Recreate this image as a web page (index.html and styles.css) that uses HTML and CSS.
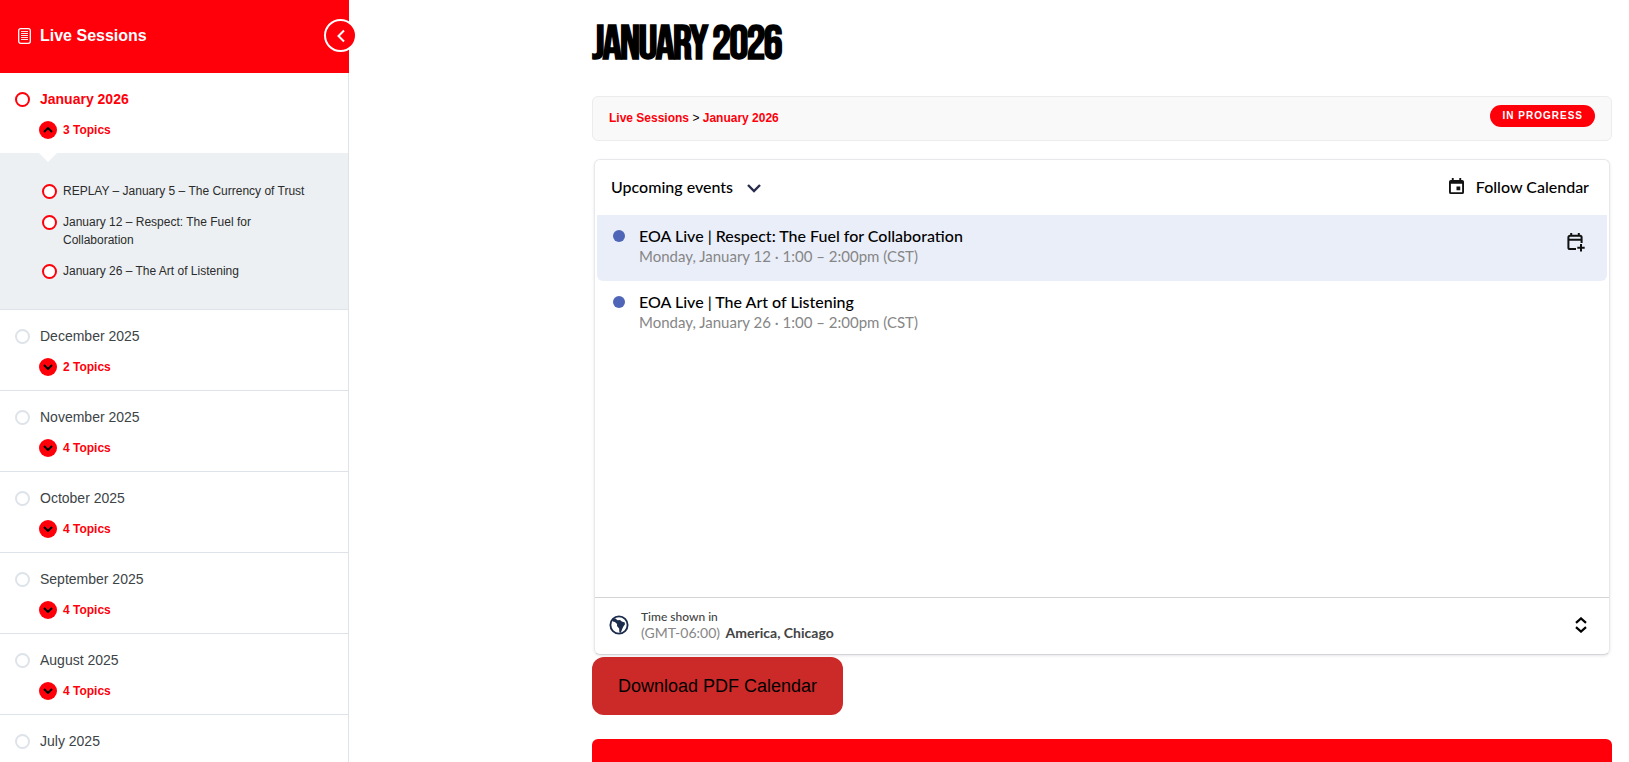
FILE: index.html
```html
<!DOCTYPE html>
<html lang="en">
<head>
    <meta charset="UTF-8">
    <meta name="viewport" content="width=device-width, initial-scale=1.0">
    <title>January 2026 - Live Sessions</title>
    <link rel="stylesheet" href="styles.css">
</head>
<body>
    <div class="focus">
        <aside class="sidebar">
            <header class="sidebar-header">
                <svg class="course-icon" viewBox="0 0 13 16" fill="none" stroke="#fff">
                    <rect x="0.7" y="0.7" width="11.6" height="14.6" rx="2" stroke-width="1.3"/>
                    <path d="M3 3.5h7M3 5.5h7M3 7.5h7M3 9.5h7M3 11.5h7" stroke-width="0.9"/>
                </svg>
                <a class="course-title" href="#">Live Sessions</a>
                <button class="sidebar-toggle" type="button" aria-label="Collapse sidebar">
                    <svg width="10" height="14" viewBox="0 0 10 14" fill="none" stroke="#fff" stroke-width="2"><path d="M8 1.5 2.5 7 8 12.5"/></svg>
                </button>
            </header>
            <nav class="lessons">
                <section class="lesson current">
                    <a class="lesson-link" href="#"><span class="status"></span>January 2026</a>
                    <button class="topics-toggle" type="button"><span class="toggle-icon"><svg viewBox="0 0 10 6"><path d="M1 5l4-4 4 4"/></svg></span>3 Topics</button>
                    <ul class="topics">
                        <li><a href="#"><span class="status"></span>REPLAY – January 5 – The Currency of Trust</a></li>
                        <li><a href="#"><span class="status"></span>January 12 – Respect: The Fuel for Collaboration</a></li>
                        <li><a href="#"><span class="status"></span>January 26 – The Art of Listening</a></li>
                    </ul>
                </section>
                <section class="lesson">
                    <a class="lesson-link" href="#"><span class="status"></span>December 2025</a>
                    <button class="topics-toggle" type="button"><span class="toggle-icon"><svg viewBox="0 0 10 6"><path d="M1 1l4 4 4-4"/></svg></span>2 Topics</button>
                </section>
                <section class="lesson">
                    <a class="lesson-link" href="#"><span class="status"></span>November 2025</a>
                    <button class="topics-toggle" type="button"><span class="toggle-icon"><svg viewBox="0 0 10 6"><path d="M1 1l4 4 4-4"/></svg></span>4 Topics</button>
                </section>
                <section class="lesson">
                    <a class="lesson-link" href="#"><span class="status"></span>October 2025</a>
                    <button class="topics-toggle" type="button"><span class="toggle-icon"><svg viewBox="0 0 10 6"><path d="M1 1l4 4 4-4"/></svg></span>4 Topics</button>
                </section>
                <section class="lesson">
                    <a class="lesson-link" href="#"><span class="status"></span>September 2025</a>
                    <button class="topics-toggle" type="button"><span class="toggle-icon"><svg viewBox="0 0 10 6"><path d="M1 1l4 4 4-4"/></svg></span>4 Topics</button>
                </section>
                <section class="lesson">
                    <a class="lesson-link" href="#"><span class="status"></span>August 2025</a>
                    <button class="topics-toggle" type="button"><span class="toggle-icon"><svg viewBox="0 0 10 6"><path d="M1 1l4 4 4-4"/></svg></span>4 Topics</button>
                </section>
                <section class="lesson">
                    <a class="lesson-link" href="#"><span class="status"></span>July 2025</a>
                </section>
            </nav>
        </aside>

        <main class="content">
            <h1>January 2026</h1>
            <div class="lesson-status">
                <div class="breadcrumbs"><a href="#">Live Sessions</a> &gt; <a href="#">January 2026</a></div>
                <span class="badge">In Progress</span>
            </div>

            <div class="calendar">
                <div class="calendar-header">
                    <button class="calendar-btn view-btn" type="button">Upcoming events
                        <svg width="14" height="9" viewBox="0 0 14 9" fill="none" stroke="#292d4c" stroke-width="2.4"><path d="M1 1l6 6 6-6"/></svg>
                    </button>
                    <button class="calendar-btn" type="button">
                        <svg width="15" height="17" viewBox="0 0 16 18">
                            <path fill="#111" fill-rule="evenodd" d="M3 0h2v2h6V0h2v2h1a2 2 0 0 1 2 2v11a2 2 0 0 1-2 2H2a2 2 0 0 1-2-2V4a2 2 0 0 1 2-2h1zM2 6v9h12V6zM8 9h4v4H8z"/>
                        </svg>
                        Follow Calendar
                    </button>
                </div>
                <ul class="events">
                    <li class="event active">
                        <span class="dot"></span>
                        <div class="event-text">
                            <div class="event-title">EOA Live | Respect: The Fuel for Collaboration</div>
                            <div class="event-time">Monday, January 12 · 1:00 – 2:00pm (CST)</div>
                        </div>
                        <button class="add-btn" type="button" aria-label="Add to calendar">
                            <svg width="18" height="19" viewBox="0 0 18 19" fill="none" stroke="#111" stroke-width="2">
                                <path d="M9 16H3a1.6 1.6 0 0 1-1.6-1.6V4.4A1.6 1.6 0 0 1 3 2.8h10a1.6 1.6 0 0 1 1.6 1.6V10M1.4 6.8h13.2M4.2 0v3M11.8 0v3M14 11v7.4M10.3 14.7h7.4"/>
                            </svg>
                        </button>
                    </li>
                    <li class="event">
                        <span class="dot"></span>
                        <div class="event-text">
                            <div class="event-title">EOA Live | The Art of Listening</div>
                            <div class="event-time">Monday, January 26 · 1:00 – 2:00pm (CST)</div>
                        </div>
                    </li>
                </ul>
                <button class="timezone" type="button">
                    <svg width="20" height="20" viewBox="0 0 20 20">
                        <circle cx="10" cy="10" r="8.6" fill="none" stroke="#1b2b4b" stroke-width="1.9"/>
                        <path fill="#1b2b4b" d="M3.2 4.2 6.5 3.6l2 1.6 2.5-.1 1.8 1.5 3 .9.1 1.9-1.5 2-1.2 2.6-1.4 3.8-1.4-.2-.3-4.2-2.1-2.4.1-2.1-2.2-1.9-2-.6z"/>
                    </svg>
                    <span class="timezone-text">
                        <span class="timezone-label">Time shown in</span>
                        <span class="timezone-value"><span class="offset">(GMT-06:00)</span> <b>America, Chicago</b></span>
                    </span>
                    <svg width="12" height="16" viewBox="0 0 12 16" fill="none" stroke="#000" stroke-width="2.2"><path d="M1 5.8l5-4.4 5 4.4M1 10.2l5 4.4 5-4.4"/></svg>
                </button>
            </div>

            <a class="download" href="#">Download PDF Calendar</a>
            <div class="banner"></div>
        </main>
    </div>
</body>
</html>
```
FILE: styles.css
```css
* {
    box-sizing: border-box;
}
body {
    margin: 0;
    font-family: Arial, 'Liberation Sans', sans-serif;
    font-size: 14px;
    color: #000;
    background: #fff;
}
a {
    color: inherit;
    text-decoration: none;
}
button {
    padding: 0;
    border: none;
    background: none;
    font: inherit;
    color: inherit;
    cursor: pointer;
}
ul {
    margin: 0;
    padding: 0;
    list-style: none;
}
svg {
    flex: none;
}
.focus {
    display: flex;
    height: 100vh;
    overflow: hidden;
}

/* Sidebar */
.sidebar {
    flex: none;
    width: 349px;
    border-right: 1px solid #dde3e8;
}
.sidebar-header {
    position: relative;
    display: flex;
    align-items: center;
    gap: 9px;
    height: 73px;
    margin-right: -1px;
    padding: 0 18px 2px;
    background: #ff000a;
    color: #fff;
}
.course-icon {
    width: 13px;
    height: 16px;
}
.course-title {
    font-size: 16px;
    font-weight: bold;
}
.sidebar-toggle {
    position: absolute;
    top: 19px;
    right: -8px;
    display: flex;
    align-items: center;
    justify-content: center;
    width: 33px;
    height: 33px;
    border: 2px solid #fff;
    border-radius: 50%;
    background: #ff000a;
}
.lesson {
    min-height: 81px;
    padding-top: 16px;
    border-bottom: 1px solid #dde3e8;
}
.lesson-link {
    display: flex;
    align-items: center;
    gap: 10px;
    padding-left: 15px;
    line-height: 20px;
    color: #3c4447;
}
.status {
    flex: none;
    width: 15px;
    height: 15px;
    border: 2px solid #dde3e8;
    border-radius: 50%;
    background: #fff;
}
.current .status {
    border-color: #ff000a;
}
.current .lesson-link {
    font-weight: bold;
    color: #ff000a;
}
.topics-toggle {
    display: flex;
    align-items: center;
    gap: 6px;
    margin: 12px 0 14px 39px;
    font-size: 12px;
    font-weight: bold;
    color: #ff000a;
}
.toggle-icon {
    display: flex;
    align-items: center;
    justify-content: center;
    width: 18px;
    height: 18px;
    border-radius: 50%;
    background: #ff000a;
}
.toggle-icon svg {
    width: 10px;
    height: 6px;
    fill: none;
    stroke: #000;
    stroke-width: 2;
}
.topics {
    position: relative;
    display: flex;
    flex-direction: column;
    gap: 13px;
    padding: 29px 32px 29px 42px;
    background: #ecf0f3;
}
.topics::before {
    content: '';
    position: absolute;
    top: 0;
    left: 39px;
    border: 9px solid transparent;
    border-top-color: #fff;
    border-bottom: 0;
}
.topics a {
    display: flex;
    gap: 6px;
    font-size: 12px;
    line-height: 18px;
    color: #2b2b2b;
}
.topics .status {
    margin-top: 2px;
}

/* Lesson */
.content {
    flex: 1;
    padding: 21px 17px 0 243px;
}
h1 {
    margin: 0 0 27px;
    font-family: 'Bebas Neue', 'Liberation Sans Narrow', sans-serif;
    font-size: 48px;
    line-height: 48px;
    letter-spacing: -2px;
    text-transform: uppercase;
}
.lesson-status {
    display: flex;
    justify-content: space-between;
    align-items: flex-start;
    height: 45px;
    margin-bottom: 18px;
    padding: 8px 16px;
    border: 1px solid #ececec;
    border-radius: 6px;
    background: #f9f9f9;
}
.breadcrumbs {
    font-size: 12px;
    line-height: 26px;
}
.breadcrumbs a {
    font-weight: bold;
    color: #ff000a;
}
.badge {
    padding: 0 12px 0 13px;
    border-radius: 11px;
    background: #ff000a;
    color: #fff;
    font-size: 10px;
    font-weight: bold;
    line-height: 22px;
    letter-spacing: 1px;
    text-transform: uppercase;
}

/* Calendar widget */
.calendar {
    display: flex;
    flex-direction: column;
    height: 496px;
    margin: 0 2px 2px;
    border: 1px solid #e8e8ec;
    border-bottom-color: #d4d4da;
    border-radius: 6px;
    box-shadow: 0 1px 3px rgba(0, 0, 0, 0.1);
    font-family: Lato, sans-serif;
    font-size: 16px;
}
.calendar-header {
    display: flex;
    justify-content: space-between;
    align-items: center;
    height: 55px;
    padding: 0 20px 2px 16px;
}
.calendar-btn {
    display: flex;
    align-items: center;
    gap: 12px;
    font-weight: 500;
}
.view-btn {
    gap: 14px;
}
.view-btn svg {
    margin-top: 3px;
}
.events {
    flex: 1;
    padding: 0 2px;
}
.event {
    display: flex;
    gap: 14px;
    height: 66px;
    padding: 11px 22px 0 16px;
    border-radius: 0 0 6px 6px;
}
.event.active {
    background: #eaeef9;
}
.dot {
    flex: none;
    width: 12px;
    height: 12px;
    margin-top: 4px;
    border-radius: 50%;
    background: #4f65b8;
}
.event-text {
    flex: 1;
    line-height: 20px;
}
.event-title {
    font-weight: 500;
}
.event-time {
    font-size: 15px;
    color: #868686;
}
.add-btn {
    align-self: flex-start;
    margin-top: 7px;
}
.timezone {
    display: flex;
    align-items: center;
    gap: 12px;
    height: 57px;
    padding: 0 22px 2px 14px;
    border-top: 1px solid #d4d4d4;
    text-align: left;
    color: #444;
}
.timezone-text {
    flex: 1;
    display: flex;
    flex-direction: column;
    line-height: 16px;
}
.timezone-label {
    font-size: 12px;
    font-weight: 500;
}
.timezone-value {
    font-size: 14px;
}
.offset {
    margin-right: 2px;
    color: #868686;
}

.download {
    display: inline-block;
    padding: 0 26px;
    border-radius: 12px;
    background: #cc2929;
    font-size: 18px;
    line-height: 58px;
}
.banner {
    height: 60px;
    margin-top: 24px;
    border-radius: 6px;
    background: #ff000a;
}
```
